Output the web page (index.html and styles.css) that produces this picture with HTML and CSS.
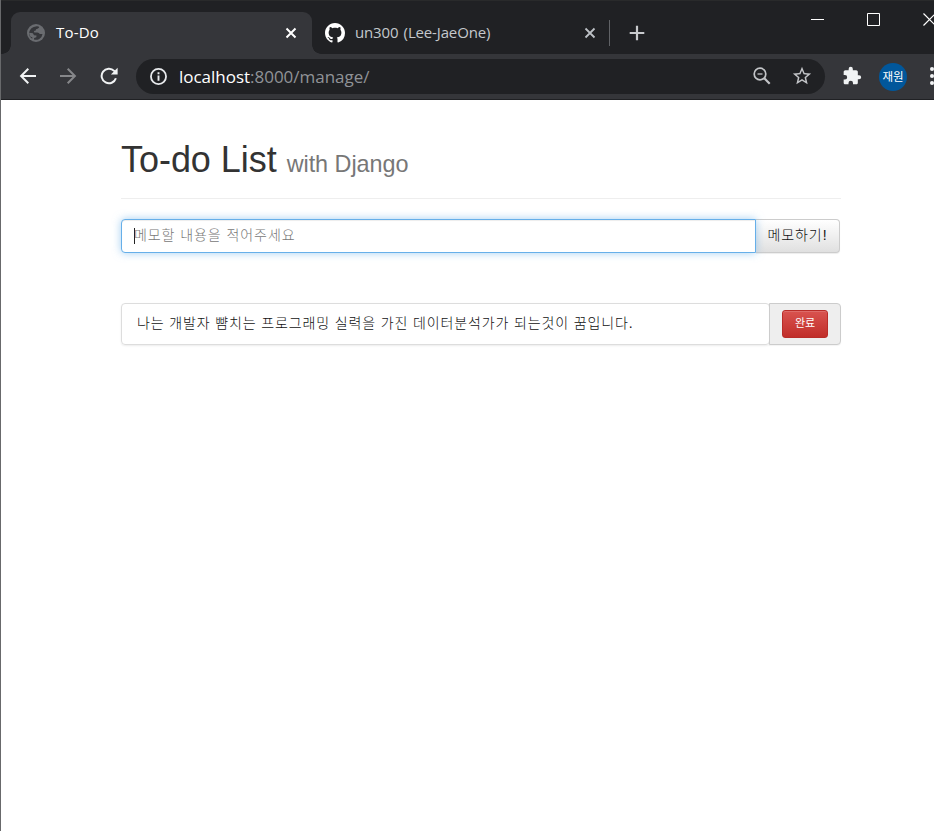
FILE: index.html
```html
<!DOCTYPE html>
<html lang="ko">
<head>
<meta charset="utf-8">
<title>To-Do</title>
<link rel="stylesheet" href="styles.css">
</head>
<body>
<div class="window">
  <header class="tabstrip">
    <div class="tab tab-active">
      <svg class="globe" width="18" height="18" viewBox="0 0 18 18"><circle cx="9" cy="9" r="9" fill="#6a6c70"/><path d="M9.7 2.2Q12.2 2.1 12.2 3.5L10.5 4.8 9 5.2 8.8 6.6 6.9 7.1 7.3 8.5H10.3Q12.4 8.5 12.7 10.1H15.5Q15.3 13 12.3 14.9 9.7 16.2 7 15.5L7.1 14 9.3 13.2 9.5 11.5 7 11.2 5.9 9.2 2.2 8.7Q2.3 11 3.5 12.7L5.3 13.2V14.8Q1.6 12.8 2.1 8.6 3 3 9.7 2.2Z" fill="#35363a"/></svg>
      <span class="tab-title">To-Do</span>
      <svg class="close" width="12" height="12" viewBox="0 0 12 12"><path d="M1.5 1.5l9 9m0-9l-9 9" stroke="#fff" stroke-width="2"/></svg>
    </div>
    <div class="tab tab-idle">
      <svg class="github" width="20" height="20" viewBox="0 0 16 16"><path fill="#fff" d="M8 0C3.58 0 0 3.58 0 8c0 3.54 2.29 6.53 5.47 7.59.4.07.55-.17.55-.38 0-.19-.01-.82-.01-1.49-2.01.37-2.53-.49-2.69-.94-.09-.23-.48-.94-.82-1.13-.28-.15-.68-.52-.01-.53.63-.01 1.08.58 1.23.82.72 1.21 1.87.87 2.33.66.07-.52.28-.87.51-1.07-1.78-.2-3.64-.89-3.64-3.95 0-.87.31-1.59.82-2.15-.08-.2-.36-1.02.08-2.12 0 0 .67-.21 2.2.82.64-.18 1.32-.27 2-.27s1.36.09 2 .27c1.53-1.04 2.2-.82 2.2-.82.44 1.1.16 1.92.08 2.12.51.56.82 1.27.82 2.15 0 3.07-1.87 3.75-3.65 3.95.29.25.54.73.54 1.48 0 1.07-.01 1.93-.01 2.2 0 .21.15.46.55.38A8.01 8.01 0 0 0 16 8c0-4.42-3.58-8-8-8z"/></svg>
      <span class="tab-title title-idle">un300 (Lee-JaeOne)</span>
      <svg class="close" width="12" height="12" viewBox="0 0 12 12"><path d="M1.5 1.5l9 9m0-9l-9 9" stroke="#bdc1c6" stroke-width="1.8"/></svg>
    </div>
    <svg class="new-tab" width="16" height="16" viewBox="0 0 16 16"><path d="M8 .7v14.6M.7 8h14.6" stroke="#c8cacd" stroke-width="2.2"/></svg>
    <div class="controls">
      <svg width="14" height="14" viewBox="0 0 14 14"><path d="M0 7.5h13" stroke="#fff"/></svg>
      <svg width="14" height="14" viewBox="0 0 14 14"><path d="M.5 1.5h12v12H.5z" fill="none" stroke="#fff"/></svg>
      <svg width="14" height="14" viewBox="0 0 14 14"><path d="M.5 1.5l12 12m0-12l-12 12" stroke="#fff" stroke-width="1.2"/></svg>
    </div>
  </header>
  <div class="toolbar">
    <svg class="nav" width="18" height="18" viewBox="0 0 18 18"><path d="M17 9H2.5M9.3 1.8L2.1 9l7.2 7.2" fill="none" stroke="#f1f3f4" stroke-width="2"/></svg>
    <svg class="nav" width="18" height="18" viewBox="0 0 18 18"><path d="M1 9h14.5M8.7 1.8L15.9 9l-7.2 7.2" fill="none" stroke="#86878a" stroke-width="2"/></svg>
    <svg class="reload" width="18" height="18" viewBox="0 0 18 18"><path d="M15.9 11.2A7.3 7.3 0 1 1 14.2 3.9L15.4 5.1" fill="none" stroke="#f1f3f4" stroke-width="2"/><path d="M17.6.8v6.7h-6.7z" fill="#f1f3f4"/></svg>
    <div class="omnibox">
      <svg width="17" height="17" viewBox="0 0 16 16"><circle cx="8" cy="8" r="7.1" fill="none" stroke="#e8eaed" stroke-width="1.7"/><path d="M8 7v5M8 4v1.8" stroke="#e8eaed" stroke-width="1.8"/></svg>
      <span class="url"><span class="host">localhost</span>:8000/manage/</span>
      <svg class="zoom" width="18" height="18" viewBox="0 0 18 18"><circle cx="7" cy="7" r="5.8" fill="none" stroke="#c3c5c8" stroke-width="1.7"/><path d="M4.5 7h5" stroke="#c3c5c8" stroke-width="1.3"/><path d="M11.3 11.3l5.4 5.4" stroke="#c3c5c8" stroke-width="2.2"/></svg>
      <svg width="22" height="22" viewBox="0 0 24 24"><path fill="#c3c5c8" d="M22 9.24l-7.19-.62L12 2 9.19 8.63 2 9.24l5.46 4.73L5.82 21 12 17.27 18.18 21l-1.63-7.03L22 9.24zM12 15.4l-3.76 2.27 1-4.28-3.32-2.88 4.38-.38L12 6.1l1.71 4.04 4.38.38-3.32 2.88 1 4.28L12 15.4z"/></svg>
    </div>
    <svg class="puzzle" width="20" height="20" viewBox="0 0 24 24"><path fill="#f1f3f4" d="M20.5 11H19V7c0-1.1-.9-2-2-2h-4V3.5a2.5 2.5 0 0 0-5 0V5H4c-1.1 0-2 .9-2 2v3.8h1.5a2.7 2.7 0 0 1 0 5.4H2V20c0 1.1.9 2 2 2h3.8v-1.5a2.7 2.7 0 0 1 5.4 0V22H17c1.1 0 2-.9 2-2v-4h1.5a2.5 2.5 0 0 0 0-5z"/></svg>
    <span class="avatar">재원</span>
    <svg class="more" width="4" height="18" viewBox="0 0 4 18"><g fill="#f1f3f4"><circle cx="2" cy="2" r="2"/><circle cx="2" cy="9" r="2"/><circle cx="2" cy="16" r="2"/></g></svg>
  </div>
  <main class="page">
    <h1 class="heading">To-do List <small>with Django</small></h1>
    <form class="memo-form">
      <div class="memo-input"><span class="caret"></span><span class="placeholder">메모할 내용을 적어주세요</span></div>
      <div class="memo-button"><span>메모하기!</span></div>
    </form>
    <div class="todo">
      <div class="todo-text"><span>나는 개발자 뺨치는 프로그래밍 실력을 가진 데이터분석가가 되는것이 꿈입니다.</span></div>
      <div class="todo-action"><span class="done">완료</span></div>
    </div>
  </main>
</div>
</body>
</html>
```
FILE: styles.css
```css
* { box-sizing: border-box; }
body { margin: 0; overflow: hidden; font-family: "Liberation Sans", "Noto Sans CJK KR", sans-serif; }
svg { display: block; flex: none; }
.window { width: 934px; height: 831px; overflow: hidden; background: #fff; border-left: 1px solid #68696b; }

.tabstrip { display: flex; height: 54px; padding: 12px 0 0 10px; background: #202124; border-top: 1px solid #292a2b; }
.tab { display: flex; align-items: center; flex: none; height: 42px; font-family: "Open Sans", "Noto Sans", sans-serif; font-size: 15px; white-space: nowrap; }
.tab-active { position: relative; width: 301px; padding: 0 15px 1px 16px; background: #35363a; border-radius: 9px 9px 0 0; color: #fff; margin-top: -1px; }
.tab-active::before, .tab-active::after { content: ""; position: absolute; bottom: 0; width: 9px; height: 9px; }
.tab-active::before { left: -9px; background: radial-gradient(circle at 0 0, transparent 8.5px, #35363a 9px); }
.tab-active::after { right: -9px; background: radial-gradient(circle at 100% 0, transparent 8.5px, #35363a 9px); }
.tab-title { flex: 1; margin: -2px 0 0 11px; letter-spacing: .2px; }
.title-idle { margin: -1px 0 0 10px; letter-spacing: -.15px; word-spacing: 1.5px; }
.tab-idle { width: 298px; height: 26px; margin-top: 7px; padding: 0 13px 1px; border-right: 1px solid #606266; color: #c4c8cc; }
.new-tab { margin: 12px 0 0 19px; }
.controls { display: flex; gap: 42px; margin: -1px 0 0 166px; }

.toolbar { display: flex; align-items: center; height: 46px; padding: 0 0 1px 18px; background: #35363a; border-bottom: 1px solid #202124; }
.nav { margin-right: 22px; }
.nav + .nav { margin-right: 23px; }
.reload { margin-right: 18px; }
.omnibox { display: flex; align-items: center; flex: none; width: 689px; height: 35px; padding: 0 12px 0 14px; border-radius: 18px; background: #202124; }
.url { flex: 1; margin-left: 12px; color: #909397; font: 17px "Open Sans", "Noto Sans", sans-serif; letter-spacing: -.02px; }
.host { color: #fff; }
.zoom { margin-right: 20px; }
.puzzle { margin-left: 17px; }
.avatar { flex: none; width: 28px; height: 28px; margin: 1px 0 0 17px; border-radius: 50%; background: #01579b; color: #fff; font: 11.5px/26px "Noto Sans CJK KR", sans-serif; text-align: center; }
.more { margin-left: 23px; }

.page { width: 720px; margin-left: 120px; color: #333; font-size: 14px; }
.heading { height: 99px; margin: 0 0 20px; padding-top: 40px; border-bottom: 1px solid #eee; font-size: 36px; font-weight: 400; line-height: 40px; letter-spacing: -.04px; }
.heading small { color: #777; font-size: 23.4px; }
.memo-form { display: flex; width: 719px; height: 34px; margin: 0 0 50px; }
.memo-input { position: relative; display: flex; align-items: center; width: 635px; padding-left: 12px; border: 1px solid #66afe9; border-radius: 4px 0 0 4px; background: #fff; box-shadow: inset 0 1px 1px rgba(0,0,0,.075), 0 0 8px rgba(102,175,233,.6); color: #777; }
.caret { width: 1px; height: 16px; background: #222; }
.placeholder { margin: -2px 0 0 -1px; line-height: 30px; font-weight: 300; letter-spacing: .93px; }
.memo-button { flex: 1; border: 1px solid #ccc; border-left: 0; border-radius: 0 4px 4px 0; background: linear-gradient(#fff, #e0e0e0); color: #111; text-align: center; line-height: 30px; font-weight: 300; letter-spacing: .9px; box-shadow: 0 1px 1px rgba(0,0,0,.075); }
.todo { display: flex; height: 42px; }
.todo-text { width: 649px; padding-left: 15px; border: 1px solid #ddd; border-radius: 4px; box-shadow: 0 1px 2px rgba(0,0,0,.075); color: #111; line-height: 38px; font-weight: 300; letter-spacing: .87px; white-space: nowrap; }
.todo-action { flex: 1; margin-left: -1px; padding: 6px 12px; border: 1px solid #ccc; border-radius: 0 4px 4px 0; background: #eee; box-shadow: 0 1px 1px rgba(0,0,0,.05); }
.done { display: block; width: 46px; height: 28px; border: 1px solid #b92c28; border-radius: 3px; background: linear-gradient(#d9534f, #c12e2a); box-shadow: inset 0 1px 0 rgba(255,255,255,.15); color: #fff; font-size: 11px; line-height: 24px; text-align: center; }
```
